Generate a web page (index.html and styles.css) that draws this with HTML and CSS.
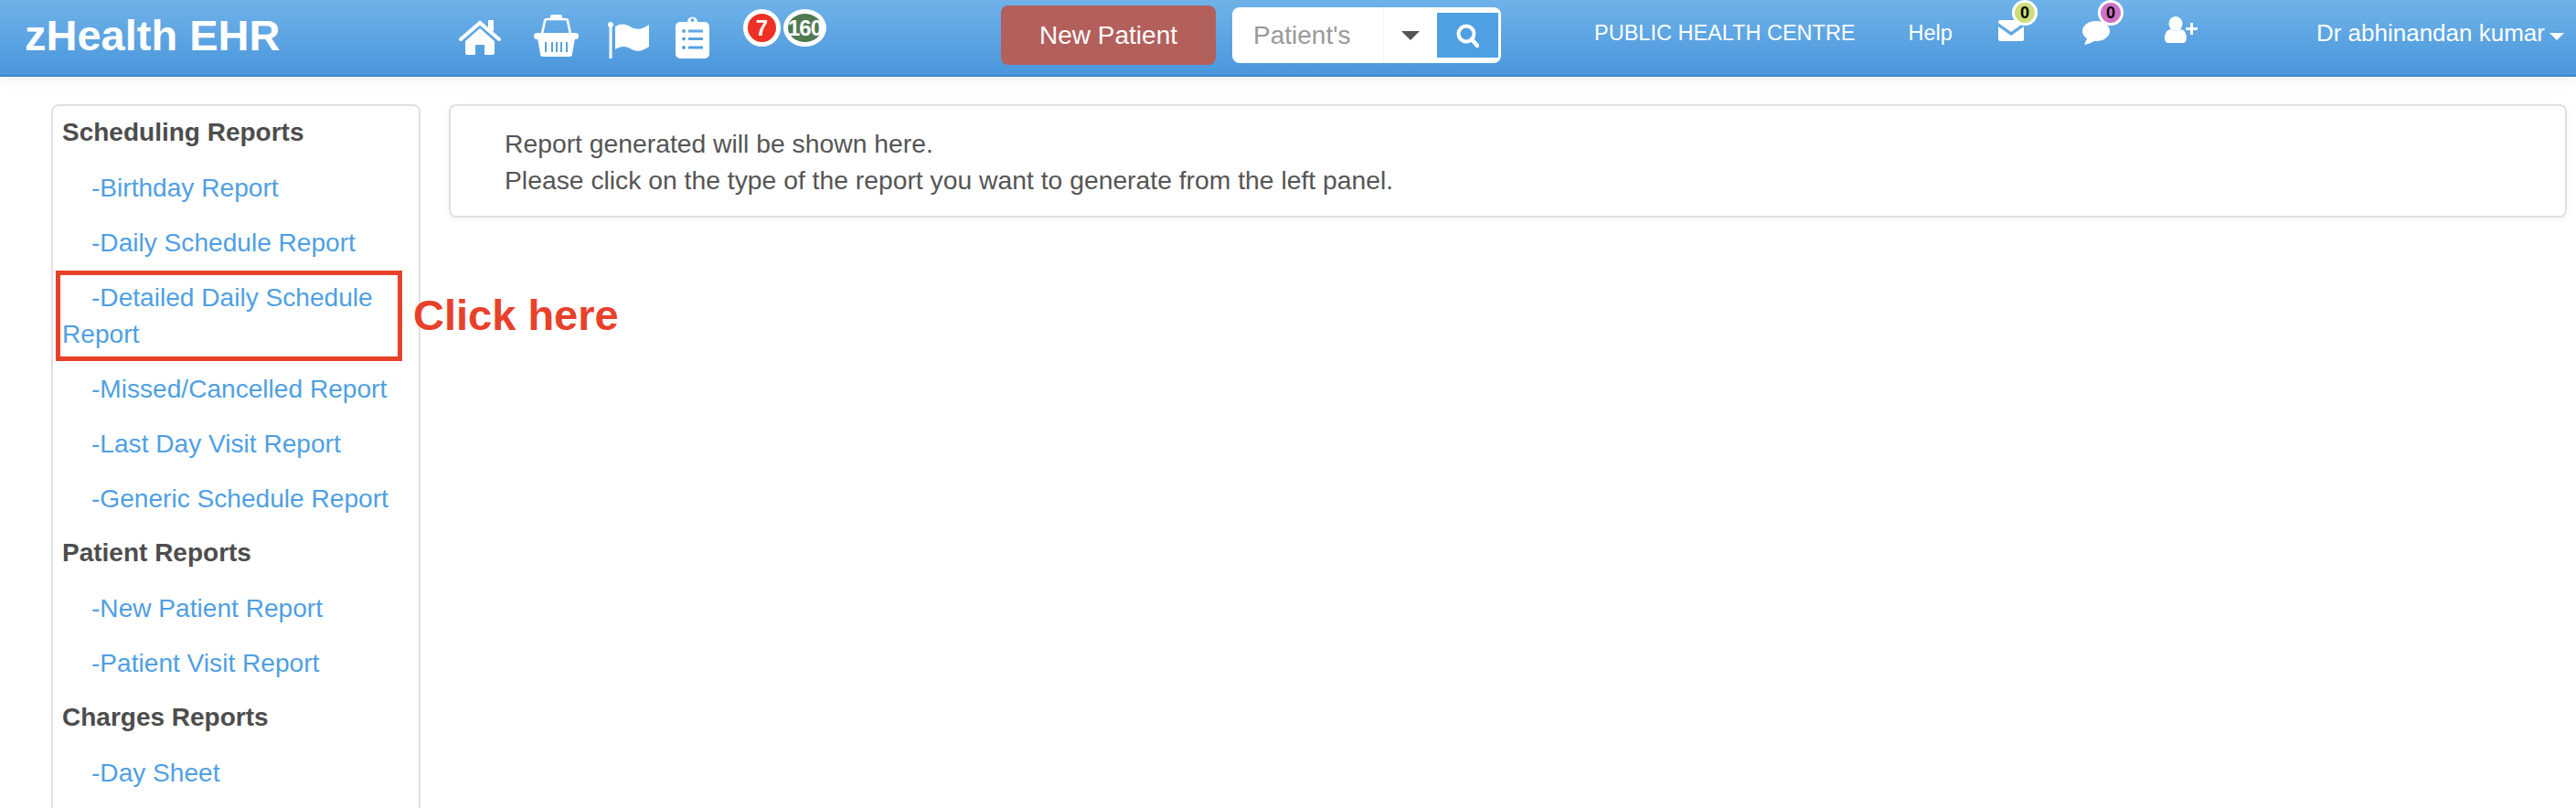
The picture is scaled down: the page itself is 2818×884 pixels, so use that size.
FILE: index.html
```html
<!DOCTYPE html>
<html>
<head>
	<meta charset="utf-8" />
	<title>zHealth EHR</title>
	<link rel="stylesheet" href="styles.css">
</head>
<body>
	<header class="topbar">
		<a class="brand" href="#">zHealth EHR</a>
		<a class="icon home" href="#">
			<svg width="46" height="38" viewBox="0 0 46 38"><polyline points="2,21 23,3 44,21" fill="none" stroke="#fff" stroke-width="4" stroke-linecap="round"/><rect x="32" y="0" width="6" height="12" fill="#fff"/><path d="M7 23 L23 9 L39 23 V36 a2 2 0 0 1-2 2 H28 V27 H18 V38 H9 a2 2 0 0 1-2-2Z" fill="#fff"/></svg>
		</a>
		<a class="icon basket" href="#">
			<svg width="49" height="46" viewBox="0 0 49 46"><path d="M9 21 L12 7 Q12 5 15 5 H34 Q37 5 37 7 L40 21" fill="none" stroke="#fff" stroke-width="2.5"/><rect x="18" y="0" width="13" height="6" rx="2" fill="#fff"/><rect x="0" y="20" width="49" height="7" rx="3.5" fill="#fff"/><path fill-rule="evenodd" d="M4 26 H45 L42 43 a3 3 0 0 1-3 3 H10 a3 3 0 0 1-3-3Z M12 30 V41 H14 V30Z M19 30 V41 H21 V30Z M24 30 V41 H26 V30Z M29 30 V41 H31 V30Z M35 30 V41 H37 V30Z" fill="#fff"/></svg>
		</a>
		<a class="icon flag" href="#">
			<svg width="45" height="41" viewBox="0 0 45 41"><circle cx="3" cy="4" r="3" fill="#fff"/><rect x="1.5" y="4" width="3" height="37" fill="#fff"/><path d="M8 6 C14 2 20 3 26 7 C32 10 38 9 45 4 V28 C38 33 32 34 26 31 C20 27 14 27 8 31Z" fill="#fff"/></svg>
		</a>
		<a class="icon clip" href="#">
			<svg width="37" height="48" viewBox="0 0 37 48"><path fill-rule="evenodd" d="M5 8 H13 A5.5 5.5 0 0 1 24 8 H32 a5 5 0 0 1 5 5 V43 a5 5 0 0 1-5 5 H5 a5 5 0 0 1-5-5 V13 a5 5 0 0 1 5-5Z M16.5 6 a2 2 0 1 0 4 0 a2 2 0 1 0-4 0Z M7 18 a2 2 0 1 0 4 0 a2 2 0 1 0-4 0Z M14 16.5 V19.5 H30 V16.5Z M7 26.5 a2 2 0 1 0 4 0 a2 2 0 1 0-4 0Z M14 25 V28 H30 V25Z M7 36 a2 2 0 1 0 4 0 a2 2 0 1 0-4 0Z M14 34.5 V37.5 H30 V34.5Z" fill="#fff"/></svg>
		</a>
		<span class="count red">7</span>
		<span class="count green">160</span>
		<a class="btn-new" href="#">New Patient</a>
		<div class="search">
			<span class="search-text">Patient's</span>
			<span class="search-drop"><i class="caret dark"></i></span>
			<span class="search-go">
				<svg width="25" height="26" viewBox="0 0 25 26"><circle cx="11" cy="11" r="8.5" fill="none" stroke="#fff" stroke-width="4"/><line x1="17" y1="17" x2="23" y2="24" stroke="#fff" stroke-width="4.5" stroke-linecap="round"/></svg>
			</span>
		</div>
		<a class="toplink centre" href="#">PUBLIC HEALTH CENTRE</a>
		<a class="toplink help" href="#">Help</a>
		<a class="icon mail" href="#">
			<svg width="28" height="23" viewBox="0 0 28 23"><path d="M0 7 L14 17 L28 7 V21 a2 2 0 0 1-2 2 H2 a2 2 0 0 1-2-2Z" fill="#fff"/><path d="M2 0 H26 a2 2 0 0 1 2 2 V3 L14 13 L0 3 V2 a2 2 0 0 1 2-2Z" fill="#fff"/></svg>
			<span class="pip lime">0</span>
		</a>
		<a class="icon chat" href="#">
			<svg width="30" height="26" viewBox="0 0 30 26"><ellipse cx="15" cy="11" rx="15" ry="11" fill="#fff"/><path d="M6 17 L2 26 C8 25 12 23 15 20Z" fill="#fff"/></svg>
			<span class="pip purple">0</span>
		</a>
		<a class="icon adduser" href="#">
			<svg width="36" height="29" viewBox="0 0 36 29"><ellipse cx="12" cy="8" rx="7.5" ry="8" fill="#fff"/><path d="M0 24 C0 18 3 14 7 14 Q12 18 17 14 C21 14 24 18 24 24 C24 27 22 29 20 29 H4 C2 29 0 27 0 24Z" fill="#fff"/><path d="M28 7 H31 V12 H36 V15 H31 V20 H28 V15 H23 V12 H28Z" fill="#fff"/></svg>
		</a>
		<a class="toplink user" href="#">Dr abhinandan kumar</a>
		<i class="caret light"></i>
	</header>

	<div class="content">
		<aside class="sidebar">
			<ul>
				<li class="title">Scheduling Reports</li>
				<li><a href="#">-Birthday Report</a></li>
				<li><a href="#">-Daily Schedule Report</a></li>
				<li><a href="#">-Detailed Daily Schedule Report</a></li>
				<li><a href="#">-Missed/Cancelled Report</a></li>
				<li><a href="#">-Last Day Visit Report</a></li>
				<li><a href="#">-Generic Schedule Report</a></li>
				<li class="title">Patient Reports</li>
				<li><a href="#">-New Patient Report</a></li>
				<li><a href="#">-Patient Visit Report</a></li>
				<li class="title">Charges Reports</li>
				<li><a href="#">-Day Sheet</a></li>
			</ul>
		</aside>
		<section class="panel">
			<p>Report generated will be shown here.</p>
			<p>Please click on the type of the report you want to generate from the left panel.</p>
		</section>
	</div>

	<div class="mark-box"></div>
	<div class="mark-text">Click here</div>
</body>
</html>
```

FILE: styles.css
```css
html, body {
	margin: 0;
	height: 884px;
	overflow: hidden;
	background-color: #fff;
}
body {
	position: relative;
	font-family: "Liberation Sans", Arial, sans-serif;
	font-size: 28.3px;
	line-height: 40px;
	color: #555;
}
a {
	text-decoration: none;
	color: #fff;
}
ul {
	list-style: none;
	margin: 0;
	padding: 0;
}
p {
	margin: 0;
}

/* top bar */
.topbar {
	display: flex;
	align-items: flex-start;
	height: 82px;
	padding-left: 27px;
	background: linear-gradient(#6fb2e9, #4a97dc);
	border-bottom: 2px solid #3f87c9;
	box-shadow: 0 2px 14px rgba(0, 0, 0, .08);
}
.brand {
	width: 475px;
	margin-top: 14px;
	font-size: 47px;
	line-height: 50px;
	font-weight: bold;
}
.icon {
	display: block;
	position: relative;
	line-height: 0;
}
.home { margin-top: 22px; }
.basket { margin: 16px 0 0 36px; }
.flag { margin: 23px 0 0 32px; }
.clip { margin: 16px 0 0 29px; }
.count {
	box-sizing: border-box;
	height: 41px;
	margin-top: 10px;
	border: 5px solid #fff;
	border-radius: 50%;
	font-size: 24px;
	line-height: 31px;
	font-weight: bold;
	text-align: center;
	color: #fff;
}
.red {
	width: 41px;
	margin-left: 37px;
	background-color: #ee3124;
}
.green {
	width: 47px;
	margin-left: 3px;
	background-color: #4f7a50;
	letter-spacing: -1px;
}
.btn-new {
	width: 235px;
	height: 65px;
	margin: 6px 0 0 191px;
	background-color: #b35f5c;
	border-radius: 8px;
	font-size: 28px;
	line-height: 65px;
	text-align: center;
}
.search {
	display: flex;
	box-sizing: border-box;
	width: 294px;
	height: 61px;
	margin: 8px 0 0 18px;
	padding: 6px 3px 6px 0;
	background-color: #fff;
	border-radius: 8px;
}
.search-text {
	width: 143px;
	padding-left: 23px;
	font-size: 28px;
	line-height: 49px;
	color: #999;
}
.search-drop {
	display: flex;
	align-items: center;
	justify-content: center;
	width: 58px;
	border-left: 1px solid #f2f2f2;
	margin-top: -6px;
	margin-bottom: -6px;
}
.search-go {
	display: flex;
	align-items: center;
	justify-content: center;
	width: 67px;
	background-color: #4f9fe3;
}
.caret {
	display: block;
	width: 0;
	height: 0;
	border-style: solid;
	border-color: transparent;
	border-bottom-width: 0;
}
.caret.dark {
	border-width: 10px 10px 0;
	border-top-color: #555;
}
.caret.light {
	margin: 36px 0 0 5px;
	border-width: 8px 8px 0;
	border-top-color: #fff;
}
.toplink {
	margin-top: 16px;
	font-size: 23.5px;
}
.centre { margin-left: 102px; }
.help { margin-left: 58px; }
.mail { margin: 22px 0 0 50px; }
.chat { margin: 23px 0 0 64px; }
.adduser { margin: 18px 0 0 60px; }
.user {
	margin-left: 130px;
	font-size: 26px;
}

/* small counters on the mail and chat icons */
.pip {
	position: absolute;
	box-sizing: border-box;
	top: -22px;
	left: 15px;
	width: 28px;
	height: 28px;
	border: 3px solid #fff;
	border-radius: 50%;
	font-size: 18px;
	line-height: 22px;
	font-weight: bold;
	text-align: center;
	color: #000;
}
.chat .pip {
	top: -23px;
	left: 17px;
}
.lime { background-color: #cfdc7a; }
.purple { background-color: #d070c8; }

/* page */
.content {
	display: flex;
	align-items: flex-start;
	gap: 31px;
	box-sizing: border-box;
	height: 800px;
	padding: 30px 10px 0 56px;
	overflow: hidden;
}
.sidebar {
	box-sizing: border-box;
	flex: 0 0 404px;
	min-height: 790px;
	padding: 0 10px;
	border: 2px solid #e0e0e0;
	border-radius: 8px;
}
.sidebar li {
	padding: 10px 0;
	font-size: 28.1px;
	text-indent: 32px;
}
.sidebar li a {
	color: #4f9fe3;
}
.sidebar li.title {
	padding: 9px 0 11px;
	font-size: 28px;
	font-weight: bold;
	text-indent: 0;
	color: #4d4d4d;
}
.panel {
	flex: 1;
	padding: 21px 59px 19px;
	border: 2px solid #e0e0e0;
	border-radius: 8px;
	box-shadow: 0 2px 6px rgba(0, 0, 0, .05);
}

/* annotation drawn over the screenshot */
.mark-box {
	position: absolute;
	box-sizing: border-box;
	left: 61px;
	top: 296px;
	width: 379px;
	height: 99px;
	border: 5px solid #e8412a;
}
.mark-text {
	position: absolute;
	left: 452px;
	top: 318px;
	font-size: 47px;
	line-height: 54px;
	font-weight: bold;
	color: #e8412a;
}
```
